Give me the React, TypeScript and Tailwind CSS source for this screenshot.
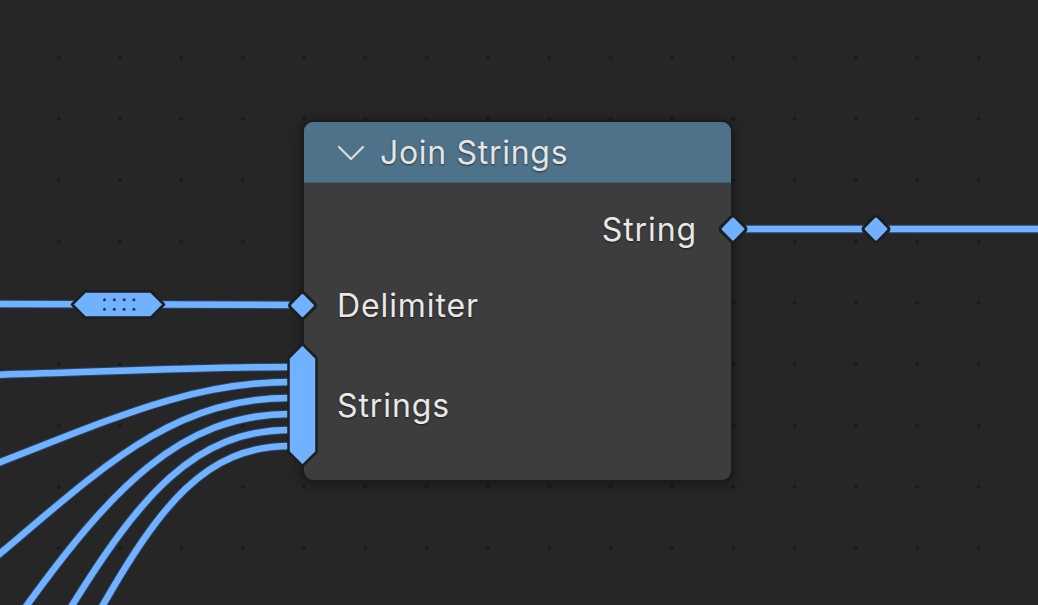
import React from 'react';

const SOCKET = '#70b2ff';
const EDGE = '#1e1e1e';

// link curves feeding the multi-input socket (end x = 288)
const stringLinks = [
  'M -10 375 C 100 372, 200 367, 290 367',
  'M -10 466 C 110 420, 190 382, 290 382',
  'M -10 562 C 100 470, 170 398, 290 398',
  'M 22 612 C 110 490, 180 414, 290 414',
  'M 68 612 C 140 495, 195 430, 290 430',
  'M 99 612 C 160 505, 205 446, 290 446',
];

const Diamond = ({ cx, cy }: { cx: number; cy: number }) => (
  <rect
    x={cx - 10}
    y={cy - 10}
    width={20}
    height={20}
    rx={3}
    fill={SOCKET}
    stroke={EDGE}
    strokeWidth={3}
    transform={`rotate(45 ${cx} ${cy})`}
  />
);

const Link = ({ d }: { d: string }) => (
  <g fill="none">
    <path d={d} stroke="#2a4366" strokeWidth={8.5} />
    <path d={d} stroke={SOCKET} strokeWidth={6.5} />
  </g>
);

export default function App() {
  const dotCols = [0, 1, 2, 3];
  return (
    <div
      className="relative w-[1038px] h-[605px] overflow-hidden bg-[#262626] bg-[radial-gradient(circle,#1b1b1b_1.6px,transparent_2.2px)] bg-[size:61.33px_61.33px] bg-[position:28px_27px]"
      style={{ fontFamily: 'Inter, "Noto Sans", sans-serif' }}
    >
      {/* node */}
      <div className="absolute left-[302px] top-[120px] w-[431px] h-[362px] rounded-[11px] border-2 border-[#1c1c1c] bg-[#3d3d3d] shadow-[0_2px_12px_rgba(0,0,0,0.45)] overflow-hidden flex flex-col">
        <div className="h-[61px] bg-[#4e7289] border-b border-[#3f5d71] flex items-center pl-[33px] gap-[15px] text-[#e4e4e4] text-[32px] tracking-[0.7px] [text-shadow:0_1px_2px_rgba(0,0,0,0.55)]">
          <svg width="28" height="18" viewBox="0 0 28 18" className="mt-[2px]">
            <path d="M2 3 L14 15 L26 3" fill="none" stroke="#d8d8d8" strokeWidth="2.4" strokeLinecap="round" strokeLinejoin="round" />
          </svg>
          <span className="leading-none mt-[1px]">Join Strings</span>
        </div>
        <div className="flex flex-col text-[32px] tracking-[0.9px] text-[#e8e8e8] [text-shadow:0_1px_2px_rgba(0,0,0,0.6)]">
          <div className="h-[44px] mt-[25px] flex items-center justify-end pr-[34px] leading-none">String</div>
          <div className="h-[44px] mt-[32px] flex items-center pl-[33px] leading-none">Delimiter</div>
          <div className="h-[124px] mt-[16px] flex items-center pl-[33px] leading-none">Strings</div>
        </div>
      </div>

      {/* links and sockets */}
      <svg className="absolute inset-0 pointer-events-none" width="1038" height="605">
        {stringLinks.map((d, i) => (
          <Link key={i} d={d} />
        ))}
        <Link d="M -10 304 L 300 305" />
        <Link d="M 733 229 L 1050 229" />

        {/* collapsed link marker */}
        <polygon
          points="72,304.5 85,291.5 151,291.5 164,304.5 151,317.5 85,317.5"
          fill={SOCKET}
          stroke={EDGE}
          strokeWidth={2.5}
          strokeLinejoin="round"
        />
        {dotCols.map((c) => (
          <g key={c} fill="#2b3442">
            <circle cx={104.5 + c * 9.8} cy={299.8} r={1.5} />
            <circle cx={104.5 + c * 9.8} cy={309.2} r={1.5} />
          </g>
        ))}

        {/* multi-input socket */}
        <polygon
          points="302.5,344 316.5,358 316.5,452 302.5,466 288.5,452 288.5,358"
          fill={SOCKET}
          stroke={EDGE}
          strokeWidth={2.5}
          strokeLinejoin="round"
        />

        <Diamond cx={302.5} cy={305.5} />
        <Diamond cx={733} cy={229} />
        <Diamond cx={876} cy={229} />
      </svg>
    </div>
  );
}
